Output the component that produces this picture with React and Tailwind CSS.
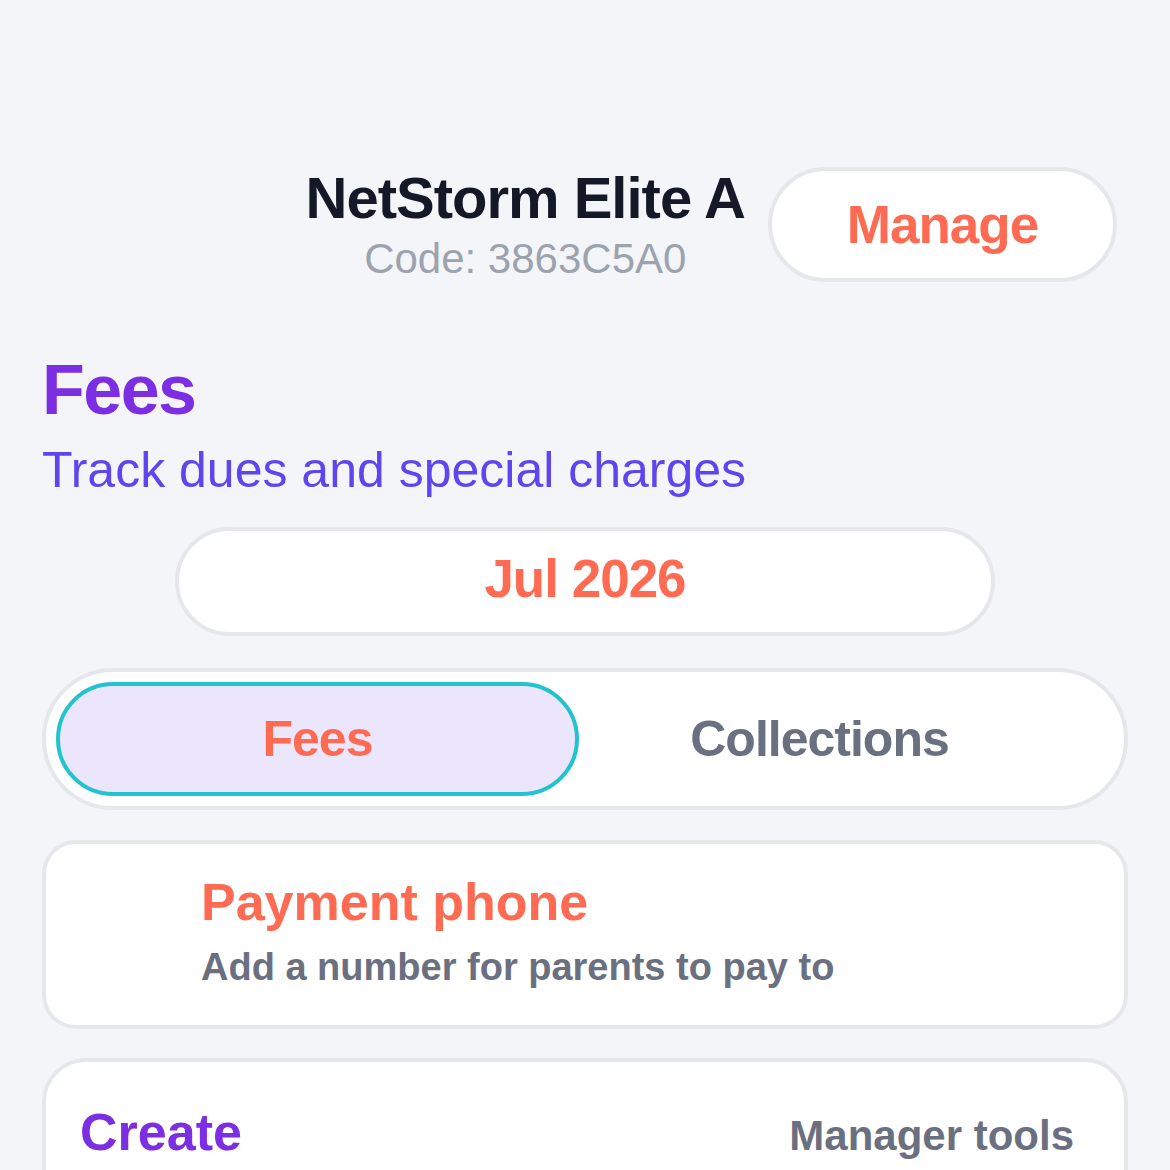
export default function App() {
  return (
    <div className="min-h-screen bg-[#f4f5f9] font-['Liberation_Sans',Arial,sans-serif] pt-[166px] px-[42px]">
      {/* team header */}
      <header className="flex items-center justify-end gap-[23px] pr-[11px]">
        <div className="text-center">
          <h1 className="text-[58px] leading-[64px] font-bold tracking-[-1px] text-[#151827]">NetStorm Elite A</h1>
          <p className="mt-[5px] text-[42px] leading-[48px] text-[#9ca3af]">Code: 3863C5A0</p>
        </div>
        <button className="w-[349px] h-[115px] rounded-full border-4 border-[#e5e7eb] bg-white text-[53px] font-bold tracking-[-1px] text-[#ff6b52]">
          Manage
        </button>
      </header>

      <section className="mt-[67px]">
        <h2 className="text-[70px] leading-[80px] font-bold tracking-[-1.5px] text-[#7b2ee2]">Fees</h2>
        <p className="mt-[10px] text-[50px] leading-[60px] text-[#5f45ef]">Track dues and special charges</p>
      </section>

      <div className="mt-[27px] mx-auto w-[820px] h-[109px] rounded-full border-4 border-[#e5e7eb] bg-white flex items-center justify-center pb-[6px]">
        <span className="text-[53px] font-bold tracking-[-1px] text-[#ff6b52]">Jul 2026</span>
      </div>

      {/* tabs */}
      <div className="mt-[32px] flex rounded-full border-4 border-[#e5e7eb] bg-white p-[10px]">
        <button className="w-[523px] h-[114px] rounded-full border-4 border-[#22c3cf] bg-[#ece6fc] text-[50px] font-bold tracking-[-1px] text-[#ff6b52]">
          Fees
        </button>
        <button className="flex-1 h-[114px] pr-[54px] text-[50px] font-bold tracking-[-1px] text-[#6b7080]">
          Collections
        </button>
      </div>

      <div className="mt-[30px] rounded-[34px] border-4 border-[#e5e7eb] bg-white pl-[155px] pt-[28px] pb-[35px]">
        <h3 className="text-[52px] leading-[60px] font-bold text-[#ff6b52]">Payment phone</h3>
        <p className="mt-[12px] text-[38px] leading-[46px] font-bold text-[#6b7080]">Add a number for parents to pay to</p>
      </div>

      <div className="mt-[29px] h-[300px] rounded-[44px] border-4 border-[#e5e7eb] bg-white pl-[34px] pr-[50px] pt-[40px]">
        <div className="flex items-baseline justify-between">
          <h3 className="text-[52px] leading-[60px] font-bold text-[#7b2ee2]">Create</h3>
          <span className="text-[42px] leading-[50px] font-bold text-[#6b7080]">Manager tools</span>
        </div>
      </div>
    </div>
  )
}
